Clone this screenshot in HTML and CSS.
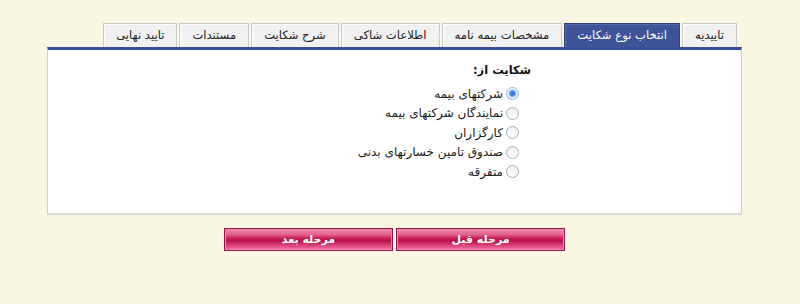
FILE: index.html
```html
<!DOCTYPE html>
<html lang="fa" dir="rtl">
<head>
<meta charset="utf-8">
<title>شکایت</title>
<link rel="stylesheet" href="styles.css">
</head>
<body>
<div class="page">
  <ul class="tabs">
    <li class="tab">تاییدیه</li>
    <li class="tab active">انتخاب نوع شکایت</li>
    <li class="tab">مشخصات بیمه نامه</li>
    <li class="tab">اطلاعات شاکی</li>
    <li class="tab">شرح شکایت</li>
    <li class="tab">مستندات</li>
    <li class="tab">تایید نهایی</li>
  </ul>
  <div class="panel">
    <div class="form">
      <div class="title">شکایت از:</div>
      <ul class="options">
        <li class="option"><label><input type="radio" name="src" checked><span>شرکتهای بیمه</span></label></li>
        <li class="option"><label><input type="radio" name="src"><span>نمایندگان شرکتهای بیمه</span></label></li>
        <li class="option"><label><input type="radio" name="src"><span>کارگزاران</span></label></li>
        <li class="option"><label><input type="radio" name="src"><span>صندوق تامین خسارتهای بدنی</span></label></li>
        <li class="option"><label><input type="radio" name="src"><span>متفرقه</span></label></li>
      </ul>
    </div>
  </div>
  <div class="actions">
    <button class="btn" type="button">مرحله قبل</button>
    <button class="btn" type="button">مرحله بعد</button>
  </div>
</div>
</body>
</html>
```

FILE: styles.css
```css
html, body {
  margin: 0;
  padding: 0;
}

body {
  background: #f9f7e3;
  font-family: "DejaVu Sans", "Noto Sans", sans-serif;
  color: #1a1a1a;
}

.page {
  width: 695px;
  margin: 0 auto 0 47px;
  padding-top: 23px;
}

.tabs {
  display: flex;
  gap: 2px;
  list-style: none;
  margin: 0 5px 0 0;
  padding: 0;
  height: 24px;
}

.tab {
  height: 23px;
  padding: 0 12px;
  border: 1px solid #c9c9c9;
  border-bottom: 0;
  background: #f1f1f1;
  box-shadow: inset 1px 1px 0 #ffffff;
  font-size: 11.6px;
  line-height: 23px;
  color: #222;
  white-space: nowrap;
}

.tab.active {
  background: #3e5399;
  border-color: #2e3f7c;
  box-shadow: inset 1px 1px 0 #5568a8;
  color: #fff;
}

.panel {
  height: 163px;
  background: #fff;
  border-top: 3px solid #3a4f95;
  border-left: 1px solid #cfcfcf;
  border-right: 1px solid #cfcfcf;
  border-bottom: 2px solid #d6d6d6;
}

.form {
  padding: 12px 210px 0 0;
}

.title {
  font-size: 11.5px;
  font-weight: bold;
  line-height: 16px;
  color: #111;
}

.options {
  list-style: none;
  margin: 6px 12px 0 0;
  padding: 0;
}

.option {
  height: 19.5px;
}

.option label {
  display: flex;
  align-items: center;
  gap: 3px;
  height: 19.5px;
  font-size: 12px;
  color: #1a1a1a;
}

.option input {
  appearance: none;
  -webkit-appearance: none;
  margin: 0;
  width: 13px;
  height: 13px;
  border-radius: 50%;
  border: 1px solid #a3aebd;
  background: linear-gradient(#eef0f3, #ffffff);
  box-sizing: border-box;
  flex: none;
}

.option input:checked {
  border-color: #8fb0d8;
  background: radial-gradient(circle, #2f73d6 0, #4b8de6 2.5px, #a9c9f0 3.5px, #eef4fb 4.5px);
}

.actions {
  display: flex;
  justify-content: center;
  gap: 3px;
  margin-top: 13px;
}

.btn {
  width: 169px;
  height: 23px;
  box-sizing: border-box;
  border: 1px solid #931546;
  box-shadow: inset 0 0 0 1px #e88aad;
  background: linear-gradient(#ec8aac 0%, #e3668f 25%, #c71d59 45%, #b9124d 55%, #d9427a 78%, #f179a6 100%);
  color: #fff;
  font-family: "DejaVu Sans", sans-serif;
  font-size: 11px;
  font-weight: bold;
  padding: 0;
  cursor: pointer;
}
```
